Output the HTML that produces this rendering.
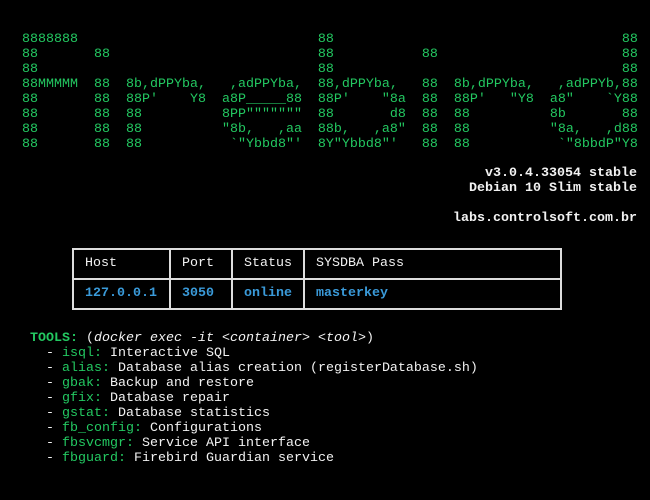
<!DOCTYPE html>
<html><head><meta charset="utf-8"><style>
body{margin:0;width:650px;height:500px;background:#000;overflow:hidden;position:relative;font-family:"Liberation Mono",monospace;font-size:13.33px;}
pre{margin:0;position:absolute;font:inherit;line-height:15px;white-space:pre;}
.g{color:#23c861}
.w{color:#f2f2f2}
.b{color:#3a9ad9;font-weight:bold}
.gb{color:#23c861;font-weight:bold}
table{position:absolute;left:72px;top:248px;border-collapse:collapse;color:#f2f2f2;}
td{border:2px solid #ddd;height:28px;padding:0 0 0 11px;line-height:28px;}
</style></head><body>
<pre class="g" style="left:22px;top:32px">8888888                              88                                    88
88       88                          88           88                       88
88                                   88                                    88
88MMMMM  88  8b,dPPYba,   ,adPPYba,  88,dPPYba,   88  8b,dPPYba,   ,adPPYb,88
88       88  88P'    Y8  a8P_____88  88P'    "8a  88  88P'   "Y8  a8"    `Y88
88       88  88          8PP"""""""  88       d8  88  88          8b       88
88       88  88          "8b,   ,aa  88b,   ,a8"  88  88          "8a,   ,d88
88       88  88           `"Ybbd8"'  8Y"Ybbd8"'   88  88           `"8bbdP"Y8</pre>
<pre class="w" style="right:13px;top:166px;text-align:right;font-weight:bold">v3.0.4.33054 stable
Debian 10 Slim stable

labs.controlsoft.com.br</pre>
<table>
<tr><td style="width:84px">Host</td><td style="width:49px">Port</td><td style="width:59px">Status</td><td style="width:244px">SYSDBA Pass</td></tr>
<tr><td class="b">127.0.0.1</td><td class="b">3050</td><td class="b">online</td><td class="b">masterkey</td></tr>
</table>
<pre class="w" style="left:30px;top:331px"><span class="gb">TOOLS:</span> (<i>docker exec -it &lt;container&gt; &lt;tool&gt;</i>)
  - <span class="g">isql:</span> Interactive SQL
  - <span class="g">alias:</span> Database alias creation (registerDatabase.sh)
  - <span class="g">gbak:</span> Backup and restore
  - <span class="g">gfix:</span> Database repair
  - <span class="g">gstat:</span> Database statistics
  - <span class="g">fb_config:</span> Configurations
  - <span class="g">fbsvcmgr:</span> Service API interface
  - <span class="g">fbguard:</span> Firebird Guardian service</pre>
</body></html>
